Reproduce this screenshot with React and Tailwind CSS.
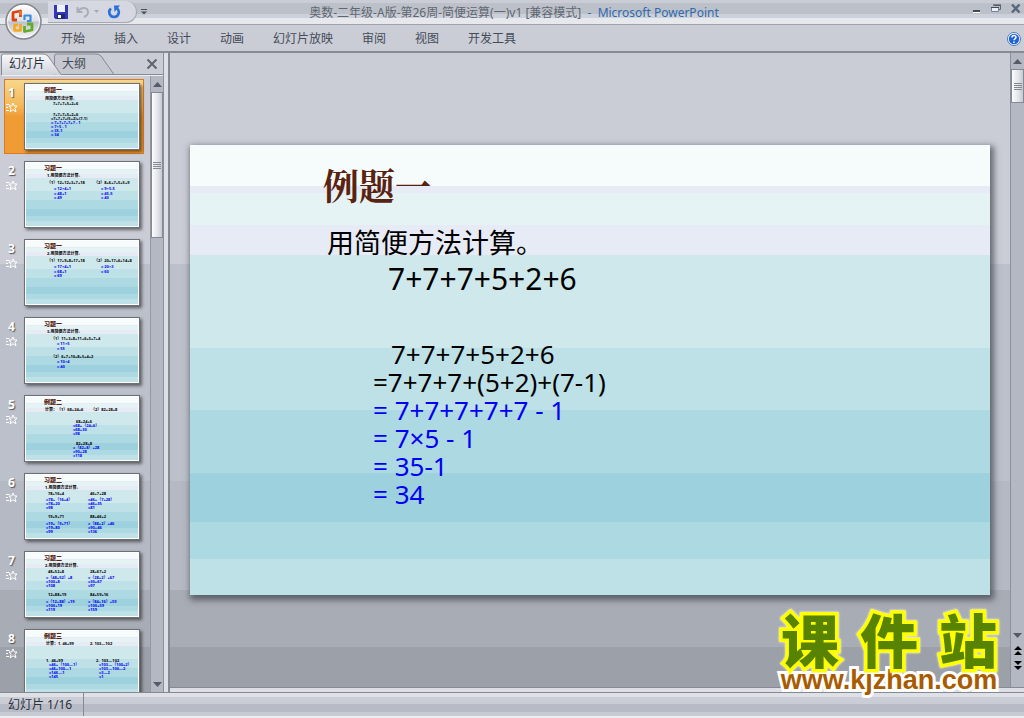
import React from 'react';

const SLIDE_BG =
  'bg-[linear-gradient(#f6fbfb_0_9.1%,#e7ebf5_9.1%_10.7%,#e5f3f5_10.7%_17.8%,#e7ebf5_17.8%_24.5%,#cfe8ec_24.5%_45.1%,#bee1e8_45.1%_58.9%,#add9e2_58.9%_72.9%,#9dd1de_72.9%_83.8%,#add9e2_83.8%_92%,#bee1e8_92%)]';
const WORK_BG =
  'bg-[linear-gradient(#cacdd6_0_33%,#bcc0ca_33%_67%,#b5b9c3_67%_84%,#a8acb4_84%_93%,#9ca0a8_93%)]';

// Each entry: x, vertical centre, text, colour key (k black, b blue)
const slides = [
  { title: '例题一', lines: [
    [19, 14, '用简便方法计算。', 'k'], [27, 19, '7+7+7+5+2+6', 'k'], [27, 30, '7+7+7+5+2+6', 'k'],
    [25, 34, '=7+7+7+(5+2)+(7-1)', 'k'], [25, 38, '= 7+7+7+7+7 - 1', 'b'], [25, 42, '= 7×5 - 1', 'b'],
    [25, 46, '= 35-1', 'b'], [25, 50, '= 34', 'b']] },
  { title: '习题一', lines: [
    [21, 13, '1.用简便方法计算。', 'k'], [21, 20, '（1）12+12+3+7+18', 'k'], [68, 20, '（2）8+6+7+5+5+9', 'k'],
    [28, 26, '= 12×4+1', 'b'], [75, 26, '= 9×5-5', 'b'], [28, 31, '= 48+1', 'b'], [75, 31, '= 45-5', 'b'],
    [28, 35, '= 49', 'b'], [75, 35, '= 40', 'b']] },
  { title: '习题一', lines: [
    [21, 13, '2.用简便方法计算。', 'k'], [21, 20, '（1）17+9+8+17+18', 'k'], [68, 20, '（2）20+17+6+14+8', 'k'],
    [28, 26, '= 17×4+1', 'b'], [75, 26, '= 20×3', 'b'], [28, 31, '= 68+1', 'b'], [75, 31, '= 60', 'b'],
    [28, 35, '= 69', 'b']] },
  { title: '习题一', lines: [
    [21, 13, '3.用简便方法计算。', 'k'], [25, 20, '（1）11+3+8+11+6+5+7+4', 'k'], [31, 25, '= 11×5', 'b'],
    [31, 30, '= 55', 'b'], [25, 38, '（2）6+7+10+8+5+4+2', 'k'], [31, 43, '= 10×4', 'b'], [31, 48, '= 40', 'b']] },
  { title: '例题二', lines: [
    [19, 13, '计算：（1）68+24+6', 'k'], [65, 13, '（2）82+28+8', 'k'], [50, 25, '68+24+6', 'k'],
    [47, 29, '=68+（24+6）', 'b'], [47, 33, '=68+30', 'b'], [47, 37, '=98', 'b'], [50, 47, '82+28+8', 'k'],
    [47, 51, '=（82+8）+28', 'b'], [47, 55, '=90+28', 'b'], [47, 59, '=118', 'b']] },
  { title: '习题二', lines: [
    [19, 13, '1.用简便方法计算。', 'k'], [22, 19, '78+16+4', 'k'], [64, 19, '46+7+28', 'k'],
    [20, 25, '=78+（16+4）', 'b'], [62, 25, '=46+（7+28）', 'b'], [20, 29, '=78+20', 'b'], [62, 29, '=46+35', 'b'],
    [20, 33, '=98', 'b'], [62, 33, '=81', 'b'], [22, 42, '19+9+71', 'k'], [64, 42, '88+46+2', 'k'],
    [20, 49, '=19+（9+71）', 'b'], [62, 49, '=（88+2）+46', 'b'], [20, 53, '=19+80', 'b'], [62, 53, '=90+46', 'b'],
    [20, 57, '=99', 'b'], [62, 57, '=136', 'b']] },
  { title: '习题二', lines: [
    [19, 13, '2.用简便方法计算。', 'k'], [22, 19, '48+52+8', 'k'], [64, 19, '28+67+2', 'k'],
    [20, 25, '=（48+52）+8', 'b'], [62, 25, '=（28+2）+67', 'b'], [20, 29, '=100+8', 'b'], [62, 29, '=30+67', 'b'],
    [20, 33, '=108', 'b'], [62, 33, '=97', 'b'], [22, 42, '12+88+19', 'k'], [64, 42, '84+59+16', 'k'],
    [20, 49, '=（12+88）+19', 'b'], [62, 49, '=（84+16）+59', 'b'], [20, 53, '=100+19', 'b'], [62, 53, '=100+59', 'b'],
    [20, 57, '=119', 'b'], [62, 57, '=159', 'b']] },
  { title: '例题三', lines: [
    [20, 13, '计算：1. 46+99', 'k'], [64, 13, '2. 103—102', 'k'], [20, 30, '1.  46+99', 'k'], [70, 30, '2.  103—102', 'k'],
    [23, 34, '=46+（100—1）', 'b'], [73, 34, '=103—（100+2）', 'b'], [23, 38, '=46+100—1', 'b'], [73, 38, '=103—100—2', 'b'],
    [23, 42, '=146—1', 'b'], [73, 42, '=3—2', 'b'], [23, 46, '=145', 'b'], [73, 46, '=1', 'b']] },
];

function OfficeOrb() {
  return (
    <button aria-label="Office 按钮" className="absolute left-1 top-0 z-10 size-10 rounded-full">
      <svg viewBox="0 0 40 40" className="size-10">
        <defs>
          <linearGradient id="orb" x1="0" y1="0" x2="0" y2="1">
            <stop offset="0" stopColor="#ffffff" />
            <stop offset=".48" stopColor="#dfe1e6" />
            <stop offset=".52" stopColor="#bfc2ca" />
            <stop offset="1" stopColor="#fafafc" />
          </linearGradient>
        </defs>
        <circle cx="19.500" cy="21.500" r="17.500" fill="url(#orb)" stroke="#85888f" strokeWidth="1.500" />
        <circle cx="19.500" cy="21.500" r="16" fill="none" stroke="#fff" strokeOpacity=".8" />
        <g fill="none" strokeLinejoin="round">
          <path d="M13 20H9V12.500L16.500 11v6" stroke="#d9430f" strokeWidth="2.800" />
          <path d="M16.500 11v4" stroke="#f0752b" strokeWidth="2.600" />
          <path d="M20.500 20v-4.500h6V21H23" stroke="#3b8ede" strokeWidth="2.200" />
          <path d="M16.500 24v6.500h-6V25H14" stroke="#f7a81b" strokeWidth="2.600" />
          <path d="M20.500 26v5.500l7.500-1.500v-6h-5" stroke="#62ac2a" strokeWidth="2.800" />
        </g>
      </svg>
    </button>
  );
}

function QuickAccess() {
  return (
    <div className="flex h-6 w-32 shrink-0 items-center">
      <div className="flex h-[22px] w-[89px] items-center gap-2 rounded-r-full border-b border-r border-[#a4a8b1] bg-[#d5d8e0] pl-[6px]">
        <button aria-label="保存">
          <svg viewBox="0 0 14 14" className="size-[14px]">
            <path d="M0 0h14v14H1.500L0 12.500z" fill="#3038b8" />
            <path d="M3 0h8v7H3z" fill="#eef3ff" />
            <path d="M3 9h8v5H3z" fill="#23276e" />
            <path d="M4 10h3v3H4z" fill="#fff" />
          </svg>
        </button>
        <button aria-label="撤消">
          <svg viewBox="0 0 14 14" className="size-[14px]" fill="none" stroke="#a9aeb9" strokeWidth="2">
            <path d="M1.500 2v5h5M2 6.500C5 1.500 12 2 12 7c0 2-1.500 4-4 5" />
          </svg>
        </button>
        <svg viewBox="0 0 5 3" className="-ml-1 h-[3px] w-[5px]"><path d="M0 0h5L2.500 3z" fill="#a3a8b2" /></svg>
        <button aria-label="重复">
          <svg viewBox="0 0 14 14" className="size-[14px]" fill="none" stroke="#2a6fdc" strokeWidth="2.600">
            <path d="M4 3.500C1 6 2 12 7 12s6.500-6.500 2.500-9" />
            <path d="M7 .5h6L7.500 7z" fill="#2a6fdc" stroke="none" />
          </svg>
        </button>
      </div>
      <button aria-label="自定义快速访问工具栏" className="ml-1">
        <svg viewBox="0 0 6 6" className="size-[6px]"><path d="M0 0h6v1H0zM0 2.500h6L3 5.500z" fill="#4c515b" /></svg>
      </button>
    </div>
  );
}

function TitleBar() {
  return (
    <header className="flex h-[25px] items-center border-b border-[#9da2ae] bg-[linear-gradient(#cacdd6_0_3px,#bcc0c9_3px_14px,#ccd0d8_14px_18px,#e6e8ec_18px)] pl-12">
      <QuickAccess />
      <h1 className="flex-1 whitespace-pre pt-[2px] text-center text-[#616771]">
        奥数-二年级-A版-第26周-简便运算(一)v1 [兼容模式]<span className="text-[#2f6aad]">{'  -  Microsoft PowerPoint'}</span>
      </h1>
      <div className="flex w-[172px] shrink-0 items-center justify-end gap-[10px] pb-2 pr-[3px]">
        <button aria-label="最小化">
          <svg viewBox="0 0 8 9" className="h-[9px] w-2"><path d="M0 6h7v2H0z" fill="#424b54" /><path d="M0 8h7v1H0z" fill="#fff" /></svg>
        </button>
        <button aria-label="还原">
          <svg viewBox="0 0 10 9" className="h-[9px] w-[10px]" fill="none">
            <path d="M3 1.500h6.500v4H8" stroke="#5c6673" /><path d="M2 .5h8v1H2z" fill="#424b54" />
            <path d="M.5 3.500h7v4h-7z" fill="#eef0f5" stroke="#7184a3" /><path d="M0 3h8v1H0z" fill="#424b54" />
          </svg>
        </button>
        <button aria-label="关闭">
          <svg viewBox="0 0 10 9" className="h-[9px] w-[10px]"><path d="M1 .5l7.500 8M8.500 .5L1 8.500" stroke="#59677a" strokeWidth="2.400" /></svg>
        </button>
      </div>
    </header>
  );
}

function Menu() {
  const items = ['开始', '插入', '设计', '动画', '幻灯片放映', '审阅', '视图', '开发工具'];
  return (
    <nav className="flex h-7 items-center justify-between border-b-2 border-[#868a92] bg-[#cacdd6] pl-[61px] pr-[3px] pt-[2px]">
      <div className="flex gap-[29px]">
        {items.map((t) => <button key={t}>{t}</button>)}
      </div>
      <button aria-label="帮助">
        <svg viewBox="0 0 14 14" className="size-[14px]">
          <circle cx="7" cy="7" r="6.500" fill="#fff" stroke="#477cba" />
          <circle cx="7" cy="7" r="5.200" fill="#1f62d9" />
          <path d="M5 5.500c0-2.500 4-2.500 4-.2C9 6.800 7 6.800 7 8.300M7 9.500V11" stroke="#fff" strokeWidth="1.500" fill="none" />
        </svg>
      </button>
    </nav>
  );
}

function Tabs() {
  return (
    <div className="relative h-[23px]">
      <svg viewBox="0 0 163 23" className="absolute inset-0 h-[23px] w-[163px]">
        <defs>
          <linearGradient id="tab" x1="0" y1="0" x2="0" y2="1">
            <stop offset="0" stopColor="#f8f9fb" /><stop offset=".5" stopColor="#e4e6ec" /><stop offset="1" stopColor="#cfd2da" />
          </linearGradient>
        </defs>
        <path d="M54.500 22V3q0-2 2-2H96q3 0 5 2l13 18.500" fill="#c5c8d1" stroke="#858991" />
        <path d="M1.500 22V3q0-2 2-2H43q3 0 5 2l13 18.500" fill="url(#tab)" stroke="#858991" />
        <path d="M61 21.500H163" stroke="#858991" />
        <path d="M2 22.500H163" stroke="#eceef2" />
      </svg>
      <div className="relative flex h-[21px] items-center pl-[9px] pr-[5px]">
        <button className="w-[53px] text-left text-[#2b303a]">幻灯片</button>
        <button>大纲</button>
        <button aria-label="关闭窗格" className="ml-auto">
          <svg viewBox="0 0 12 12" className="size-3"><path d="M1.500 1.500l9 9M10.500 1.500l-9 9" stroke="#60656d" strokeWidth="2" /></svg>
        </button>
      </div>
    </div>
  );
}

function Thumb({ slide, n }) {
  const active = n === 1;
  return (
    <li className={active
      ? 'flex h-[75px] shrink-0 border border-[#da7b23] bg-[linear-gradient(#f7d78b,#f4b85a_35%,#ef9c35_50%,#ee9b34)]'
      : 'flex h-[75px] shrink-0 border border-transparent'}>
      <div className="flex w-[19px] flex-col items-center pr-[6px] pt-1 font-bold text-white [text-shadow:1px_1px_1px_#555]">
        <span className="leading-[18px]">{n}</span>
        <svg viewBox="0 0 12 11" className="h-[11px] w-3" fill="none" stroke="#fff">
          <path d="M0 2.500h3.500M0 5.500h2M0 8.500h3M7 1l1.300 3H11L9 6.300l1 3.500-3-2-3 2 1-3.500L3 4h2.700z" />
        </svg>
      </div>
      <button aria-label={'幻灯片 ' + n} className="mt-[3px] block h-[67px] w-[116px] border border-[#6b6f78] bg-white p-px text-left shadow-[2px_2px_3px_rgba(0,0,0,.5)]">
        <div className={'relative h-full overflow-hidden whitespace-pre ' + SLIDE_BG}>
          <div className="absolute left-[18px] top-[2px] text-[6px] font-black leading-[7px] text-[#582310]">{slide.title}</div>
          {slide.lines.map(([x, y, text, c], i) => (
            <div key={i} style={{ left: x, top: y - 2 }}
              className={c === 'b' ? 'absolute text-[4px] font-bold leading-[4px] text-[#0000f5]' : 'absolute text-[4px] font-bold leading-[4px] text-black'}>
              {text}
            </div>
          ))}
        </div>
      </button>
    </li>
  );
}

function Arrow({ down, label }) {
  return (
    <button aria-label={label} className="flex h-4 w-full shrink-0 items-center justify-center">
      <svg viewBox="0 0 9 5" className="h-[5px] w-[9px]"><path d={down ? 'M0 0h9L4.500 5z' : 'M0 5h9L4.500 0z'} fill="#555a66" /></svg>
    </button>
  );
}

function Grip({ tall }) {
  return (
    <div className={(tall ? 'h-[146px]' : 'h-[34px]') + ' flex shrink-0 items-center justify-center border border-[#858991] bg-[linear-gradient(90deg,#fdfdfe,#e0e3ea_60%,#c5c9d2)]'}>
      <svg viewBox="0 0 8 7" className="h-[7px] w-2"><path d="M0 .5h8M0 2.500h8M0 4.500h8M0 6.500h8" stroke="#858991" /></svg>
    </div>
  );
}

function SidePane() {
  return (
    <aside className="flex w-[164px] shrink-0 flex-col border-r border-[#8c9098]">
      <Tabs />
      <div className="flex min-h-0 flex-1">
        <ol className="flex min-h-0 flex-1 flex-col gap-[3px] overflow-hidden pl-1 pr-[6px] pt-[3px]">
          {slides.map((s, i) => <Thumb key={i} slide={s} n={i + 1} />)}
        </ol>
        <div className="flex w-[13px] flex-col border-l border-[#9498a2] bg-[#b4b8c2]">
          <Arrow label="向上滚动" />
          <Grip tall />
          <div className="flex-1" />
          <Arrow down label="向下滚动" />
        </div>
      </div>
    </aside>
  );
}

function Slide() {
  return (
    <article className={'aspect-video w-full whitespace-pre pt-4 shadow-[2px_3px_6px_2px_rgba(60,64,72,.7)] ' + SLIDE_BG}>
      <h2 className="pl-[133px] font-['Noto_Serif_CJK_SC','Noto_Sans_CJK_SC',serif] text-[36px] font-bold leading-[48px] text-[#582310]">例题一</h2>
      <p className="mt-4 pl-[137px] text-[27px] leading-9 text-black">用简便方法计算。</p>
      <p className="pl-[198px] text-[30px] leading-9 text-black">7+7+7+5+2+6</p>
      <div className="mt-[43px] pl-[183px] text-[26px] leading-7 text-[#0000f5]">
        <p className="pl-[18px] text-black">7+7+7+5+2+6</p>
        <p className="text-black">=7+7+7+(5+2)+(7-1)</p>
        <p>= 7+7+7+7+7 - 1</p>
        <p>= 7×5 - 1</p>
        <p>= 35-1</p>
        <p>= 34</p>
      </div>
    </article>
  );
}

function PageStep({ down, label }) {
  return (
    <button aria-label={label} className="flex h-[15px] items-center justify-center">
      <svg viewBox="0 0 8 9" className="h-[9px] w-2">
        <path d={down ? 'M0 0h8L4 4zM0 5h8L4 9z' : 'M0 4h8L4 0zM0 9h8L4 5z'} fill="#000" />
      </svg>
    </button>
  );
}

function Watermark() {
  return (
    <div className="pointer-events-none absolute bottom-6 right-[21px] flex w-[228px] flex-col items-center">
      <div className="flex w-full justify-between px-[6px] text-[58px] font-black leading-[50px] text-[#578300] [-webkit-text-stroke:7px_#ffff00] [paint-order:stroke_fill] [filter:drop-shadow(0_0_1px_#fff)]">
        <span>课</span><span>件</span><span>站</span>
      </div>
      <div className="font-['Liberation_Sans',sans-serif] text-[27px] font-bold leading-7 text-[#a85b00] [-webkit-text-stroke:6px_#fff] [paint-order:stroke_fill]">www.kjzhan.com</div>
    </div>
  );
}

export default function App() {
  return (
    <div className="relative flex h-screen flex-col overflow-hidden bg-[#cacdd6] font-['Noto_Sans','Noto_Sans_CJK_SC',sans-serif] text-[12px] leading-4 text-[#454b56]">
      <OfficeOrb />
      <TitleBar />
      <Menu />
      <main className={'flex min-h-0 flex-1 ' + WORK_BG}>
        <SidePane />
        <div className="w-[6px] shrink-0 border-r-2 border-[#858991] bg-[#dcdfe6]" />
        <div className="flex min-w-0 flex-1 flex-col">
          <div className="flex min-h-0 flex-1">
            <section className="flex min-w-0 flex-1 items-center px-5">
              <Slide />
            </section>
            <div className="flex w-[14px] shrink-0 flex-col border-l border-[#8c9098] bg-[#b4b8c2]">
              <Arrow label="向上滚动" />
              <Grip />
              <div className="flex-1" />
              <Arrow down label="向下滚动" />
              <PageStep label="上一张幻灯片" />
              <PageStep down label="下一张幻灯片" />
              <div className="h-[14px]" />
            </div>
          </div>
          <div className="h-[5px] shrink-0 border-t border-[#858991] bg-[#dcdfe6]" />
        </div>
      </main>
      <footer className="flex h-[26px] shrink-0 items-center border-b-2 border-t border-b-[#eceef2] border-t-[#858991] bg-[linear-gradient(#dfe1e7_0_4px,#cacdd6_4px_11px,#b7bbc5_11px_19px,#c8cbd4_19px)]">
        <div className="flex h-full w-[84px] items-center border-r border-[#858991] pl-2 text-[#2b303a]">幻灯片 1/16</div>
      </footer>
      <Watermark />
    </div>
  );
}
